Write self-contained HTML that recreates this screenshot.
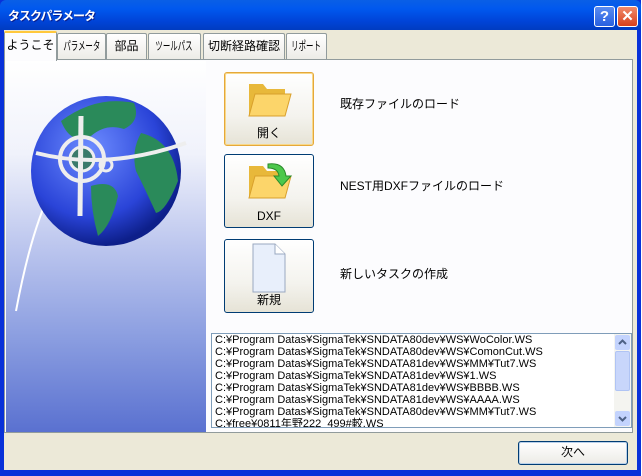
<!DOCTYPE html>
<html><head><meta charset="utf-8"><style>
*{margin:0;padding:0;box-sizing:border-box}
body{width:642px;height:476px;overflow:hidden;background:#fff;font-family:"Liberation Sans","Noto Sans CJK JP",sans-serif;font-size:12px;color:#000;position:relative}
.win{position:absolute;left:0;top:0;width:641px;height:476px;background:#0831d9;}
.title{position:absolute;left:0;top:0;width:641px;height:30px;background:linear-gradient(#0a5fe6,#0058ee 30%,#0044d8 70%,#003cc0);border-radius:6px 6px 0 0}
.title span{position:absolute;left:8px;top:7px;color:#fff;font-weight:bold;font-size:12px;letter-spacing:-1px;text-shadow:1px 1px #0a1e8c}
.tb{position:absolute;top:6px;width:21px;height:21px;border:1px solid #fff;border-radius:3px;color:#fff;font-weight:bold;text-align:center;line-height:19px;font-size:15px}
.client{position:absolute;left:4px;top:30px;width:633px;height:440px;background:#ece9d8}
.tab{position:absolute;top:3px;height:27px;background:linear-gradient(#fff,#ecebe6);border:1px solid #919b9c;border-bottom:none;border-radius:2px 2px 0 0;text-align:center;line-height:25px;font-size:12px;white-space:nowrap;overflow:hidden}
.tab.sel{top:1px;height:30px;background:#fcfcfe;border-top:2px solid #ffc83c;z-index:2}
.nar{display:inline-block;transform:scaleX(.62);transform-origin:center;font-size:12px;margin:0 -30px}
.panel{position:absolute;left:0;top:29px;width:629px;height:374px;background:#fcfcfe;border:1px solid #919b9c}
.img{position:absolute;left:1px;top:1px;width:200px;height:371px;background:linear-gradient(#fff 0%,#f0f2fb 25%,#bcc6ee 50%,#8a9de0 75%,#5a71d0 100%)}
.btn{position:absolute;left:219px;width:90px;height:74px;border:1px solid #003c74;border-radius:3px;background:linear-gradient(#fff,#f4f3ee 60%,#e6e3d6);text-align:center}
.btn .l{position:absolute;bottom:4px;left:0;right:0;font-size:12px}
.lab{position:absolute;left:335px;font-size:12px}
.list{position:absolute;left:206px;top:273px;width:421px;height:95px;background:#fff;border:1px solid #7f9db9;overflow:hidden}
.list div{height:12px;line-height:12px;font-size:11px;padding-left:3px;white-space:nowrap}
.list .sb{position:absolute;right:0;top:0;width:17px;height:93px;background:#f4f4f0;padding:0}
.sb .a{position:absolute;left:1px;width:15px;height:15px;background:#c3d3fd;border-radius:2px;padding:0}
</style></head><body>
<div class="win">
<div class="title"><span>タスクパラメータ</span>
<div class="tb" style="left:594px;background:linear-gradient(#5a8cf0,#2860e0)">?</div>
<div class="tb" style="left:617px;background:linear-gradient(#f08a6a,#d8401c)">✕</div>
</div>
<div class="client">
<div class="tab sel" style="left:0;width:53px">ようこそ</div>
<div class="tab" style="left:53px;width:49px"><span class="nar">パラメータ</span></div>
<div class="tab" style="left:102px;width:41px">部品</div>
<div class="tab" style="left:144px;width:53px"><span class="nar">ツールパス</span></div>
<div class="tab" style="left:199px;width:82px">切断経路確認</div>
<div class="tab" style="left:282px;width:41px"><span class="nar">リポート</span></div>
<div class="panel">
<div class="img"><svg width="200" height="371" viewBox="0 0 200 371">
<defs><radialGradient id="g" cx="40%" cy="35%" r="65%"><stop offset="0" stop-color="#6d8cff"/><stop offset=".7" stop-color="#2a44d8"/><stop offset="1" stop-color="#0d1f8a"/></radialGradient></defs>
<path d="M10 250 Q25 170 45 130" stroke="#fff" stroke-width="2" fill="none"/>
<circle cx="100" cy="110" r="75" fill="url(#g)"/>
<path d="M55 60 Q90 34 128 42 Q135 60 118 68 Q100 62 85 75 Q65 85 55 60Z" fill="#2a8a5a"/>
<path d="M135 72 Q168 80 172 120 Q160 150 150 152 Q140 130 130 110 Q125 90 135 72Z" fill="#2a8a5a"/>
<path d="M85 125 Q108 118 112 135 Q105 165 92 175 Q85 150 85 125Z" fill="#2a8a5a"/>
<circle cx="76" cy="98" r="22" fill="none" stroke="#eee" stroke-width="4"/>
<circle cx="76" cy="98" r="12" fill="#3a7a6a" stroke="#eee" stroke-width="3"/>
<path d="M75 55 L74 155" stroke="#eee" stroke-width="5"/>
<path d="M30 92 Q100 110 180 82" stroke="#eee" stroke-width="4" fill="none"/>
<circle cx="100" cy="104" r="6" fill="none" stroke="#eee" stroke-width="3"/>
</svg></div>
<div class="btn" style="top:12px;border-color:#e5a83a;box-shadow:inset 0 0 0 1px #f8d88a"><svg width="50" height="44" viewBox="0 0 50 44" style="margin-top:5px"><path d="M5 6h14l4 5h18v26H5z" fill="#e8b83a"/><path d="M5 38l6-22h36l-6 22z" fill="#fcd56a" stroke="#d9a02c"/></svg><div class="l">開く</div></div>
<div class="btn" style="top:94px"><svg width="50" height="44" viewBox="0 0 50 44" style="margin-top:5px"><path d="M5 6h14l4 5h18v26H5z" fill="#e8b83a"/><path d="M5 38l6-22h36l-6 22z" fill="#fcd56a" stroke="#d9a02c"/><path d="M24 4 Q40 2 42 16 L47 16 L38 26 L30 16 L35 16 Q34 8 24 8Z" fill="#4cc84c" stroke="#2a8a2a"/></svg><div class="l">DXF</div></div>
<div class="btn" style="top:179px"><svg width="40" height="52" viewBox="0 0 40 52" style="margin-top:2px"><path d="M4 2h22l10 10v38H4z" fill="#e8effb" stroke="#9aa8c0"/><path d="M26 2v10h10" fill="#fff" stroke="#9aa8c0"/></svg><div class="l">新規</div></div>
<div class="lab" style="top:35px">既存ファイルのロード</div>
<div class="lab" style="top:117px">NEST用DXFファイルのロード</div>
<div class="lab" style="top:205px">新しいタスクの作成</div>
<div class="list">
<div>C:¥Program Datas¥SigmaTek¥SNDATA80dev¥WS¥WoColor.WS</div>
<div>C:¥Program Datas¥SigmaTek¥SNDATA80dev¥WS¥ComonCut.WS</div>
<div>C:¥Program Datas¥SigmaTek¥SNDATA81dev¥WS¥MM¥Tut7.WS</div>
<div>C:¥Program Datas¥SigmaTek¥SNDATA81dev¥WS¥1.WS</div>
<div>C:¥Program Datas¥SigmaTek¥SNDATA81dev¥WS¥BBBB.WS</div>
<div>C:¥Program Datas¥SigmaTek¥SNDATA81dev¥WS¥AAAA.WS</div>
<div>C:¥Program Datas¥SigmaTek¥SNDATA80dev¥WS¥MM¥Tut7.WS</div>
<div>C:¥free¥0811年野222_499#較.WS</div>
<div class="sb">
<div class="a" style="top:1px"><svg width="15" height="15"><path d="M4 9l3.5-3.5L11 9" stroke="#4d6185" stroke-width="2" fill="none"/></svg></div>
<div class="a" style="top:17px;height:40px;background:#c8d6fb;border:1px solid #b0c4f4"></div>
<div class="a" style="bottom:1px"><svg width="15" height="15"><path d="M4 6l3.5 3.5L11 6" stroke="#4d6185" stroke-width="2" fill="none"/></svg></div>
</div>
</div>
</div>
<div style="position:absolute;left:514px;top:411px;width:110px;height:24px;border:1px solid #003c74;border-radius:3px;background:linear-gradient(#fff,#ecebe6);text-align:center;line-height:20px;box-shadow:inset 0 0 0 1px #b9d1ea">次へ</div>
</div>
</div>
</body></html>
